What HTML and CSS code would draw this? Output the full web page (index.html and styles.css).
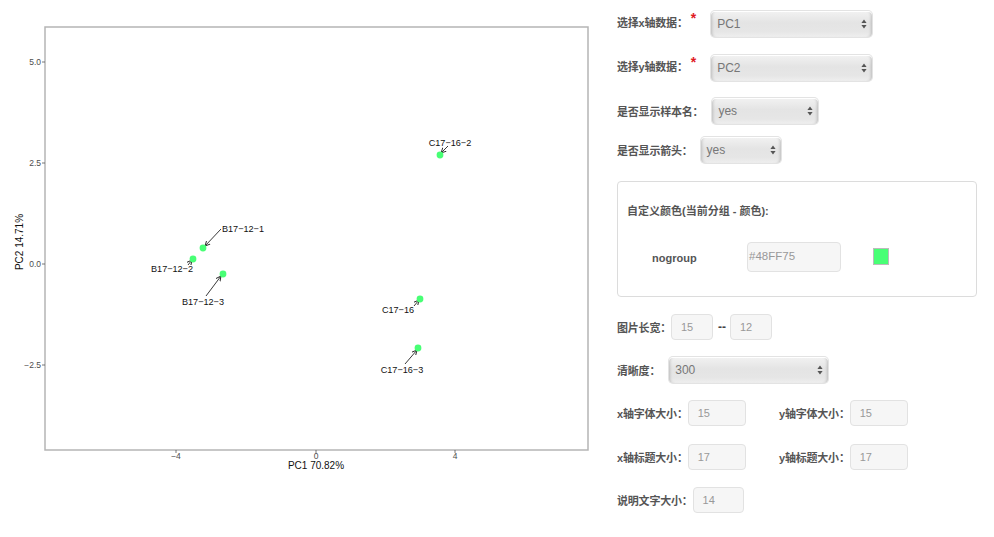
FILE: index.html
```html
<!DOCTYPE html>
<html>
<head>
<meta charset="utf-8">
<link rel="stylesheet" href="styles.css">
</head>
<body>
<div class="page">
  <div class="plot-col">
    <svg class="plot" width="610" height="537" viewBox="0 0 610 537">
      <defs>
        <marker id="ah" markerWidth="6" markerHeight="6" refX="5" refY="3" orient="auto" markerUnits="userSpaceOnUse">
          <path d="M0,0.5 L5,3 L0,5.5" fill="none" stroke="#222" stroke-width="0.9"/>
        </marker>
      </defs>
      <rect x="45" y="27" width="543" height="423" fill="#fff" stroke="#b5b5b5" stroke-width="1.5"/>
      <g class="tick">
        <line x1="42" y1="62" x2="45" y2="62"/>
        <line x1="42" y1="163" x2="45" y2="163"/>
        <line x1="42" y1="264" x2="45" y2="264"/>
        <line x1="42" y1="365" x2="45" y2="365"/>
        <line x1="176" y1="450" x2="176" y2="453"/>
        <line x1="316" y1="450" x2="316" y2="453"/>
        <line x1="455" y1="450" x2="455" y2="453"/>
      </g>
      <g class="ticklab">
        <text x="41" y="65" text-anchor="end">5.0</text>
        <text x="41" y="166" text-anchor="end">2.5</text>
        <text x="41" y="267" text-anchor="end">0.0</text>
        <text x="41" y="368" text-anchor="end">−2.5</text>
        <text x="176" y="459" text-anchor="middle">−4</text>
        <text x="316" y="459" text-anchor="middle">0</text>
        <text x="455" y="459" text-anchor="middle">4</text>
      </g>
      <text class="axtitle" x="316" y="469" text-anchor="middle">PC1 70.82%</text>
      <text class="axtitle" x="0" y="0" text-anchor="middle" transform="translate(23 242) rotate(-90)">PC2 14.71%</text>
      <g class="arrow">
        <line x1="221" y1="229" x2="205" y2="246" marker-end="url(#ah)"/>
        <line x1="188" y1="265" x2="192" y2="260" marker-end="url(#ah)"/>
        <line x1="206" y1="296" x2="221" y2="276" marker-end="url(#ah)"/>
        <line x1="448" y1="146" x2="441" y2="153" marker-end="url(#ah)"/>
        <line x1="414" y1="306" x2="419" y2="300" marker-end="url(#ah)"/>
        <line x1="405" y1="364" x2="417" y2="350" marker-end="url(#ah)"/>
      </g>
      <g class="pts">
        <circle cx="203" cy="248" r="3.4"/>
        <circle cx="193" cy="259" r="3.4"/>
        <circle cx="223" cy="274" r="3.4"/>
        <circle cx="440" cy="155" r="3.4"/>
        <circle cx="420" cy="299" r="3.4"/>
        <circle cx="418" cy="348" r="3.4"/>
      </g>
      <g class="ptlab">
        <text x="222" y="231.5">B17−12−1</text>
        <text x="193" y="271.5" text-anchor="end">B17−12−2</text>
        <text x="203" y="304.5" text-anchor="middle">B17−12−3</text>
        <text x="450" y="145.5" text-anchor="middle">C17−16−2</text>
        <text x="414" y="312.5" text-anchor="end">C17−16</text>
        <text x="402" y="372.5" text-anchor="middle">C17−16−3</text>
      </g>
    </svg>
  </div>

  <div class="panel">
    <div class="row r1">
      <span class="lab">选择x轴数据：</span><span class="star">*</span>
      <div class="sel w161"><span>PC1</span><svg class="updown" width="6" height="10" viewBox="0 0 6 10"><path d="M3 0.5 L5.6 4 L0.4 4 Z M3 9.5 L5.6 6 L0.4 6 Z" fill="#555"/></svg></div>
    </div>
    <div class="row r2">
      <span class="lab">选择y轴数据：</span><span class="star">*</span>
      <div class="sel w161"><span>PC2</span><svg class="updown" width="6" height="10" viewBox="0 0 6 10"><path d="M3 0.5 L5.6 4 L0.4 4 Z M3 9.5 L5.6 6 L0.4 6 Z" fill="#555"/></svg></div>
    </div>
    <div class="row r3">
      <span class="lab gap-a">是否显示样本名：</span>
      <div class="sel w106"><span>yes</span><svg class="updown" width="6" height="10" viewBox="0 0 6 10"><path d="M3 0.5 L5.6 4 L0.4 4 Z M3 9.5 L5.6 6 L0.4 6 Z" fill="#555"/></svg></div>
    </div>
    <div class="row r4">
      <span class="lab gap-b">是否显示箭头：</span>
      <div class="sel w80"><span>yes</span><svg class="updown" width="6" height="10" viewBox="0 0 6 10"><path d="M3 0.5 L5.6 4 L0.4 4 Z M3 9.5 L5.6 6 L0.4 6 Z" fill="#555"/></svg></div>
    </div>

    <div class="colorbox">
      <div class="cb-title">自定义颜色(当前分组 - 颜色):</div>
      <div class="cb-row">
        <span class="grp">nogroup</span>
        <div class="inp cinp">#48FF75</div>
        <span class="swatch"></span>
      </div>
    </div>

    <div class="row r5">
      <span class="lab gap-c">图片长宽：</span>
      <div class="inp w42">15</div>
      <span class="dash">--</span>
      <div class="inp w42">12</div>
    </div>
    <div class="row r6">
      <span class="lab gap-d">清晰度：</span>
      <div class="sel w159"><span>300</span><svg class="updown" width="6" height="10" viewBox="0 0 6 10"><path d="M3 0.5 L5.6 4 L0.4 4 Z M3 9.5 L5.6 6 L0.4 6 Z" fill="#555"/></svg></div>
    </div>
    <div class="row r7">
      <div class="half"><span class="lab gap-e">x轴字体大小：</span><div class="inp w58">15</div></div>
      <div class="half"><span class="lab gap-e">y轴字体大小：</span><div class="inp w58">15</div></div>
    </div>
    <div class="row r8">
      <div class="half"><span class="lab gap-e">x轴标题大小：</span><div class="inp w58">17</div></div>
      <div class="half"><span class="lab gap-e">y轴标题大小：</span><div class="inp w58">17</div></div>
    </div>
    <div class="row r9">
      <span class="lab gap-e">说明文字大小：</span>
      <div class="inp w51">14</div>
    </div>
  </div>
</div>
</body>
</html>
```

FILE: styles.css
```css
html, body {
  margin: 0;
  padding: 0;
  background: #fff;
}
body {
  width: 994px;
  height: 537px;
  overflow: hidden;
  font-family: "Liberation Sans", "Noto Sans CJK SC", sans-serif;
}
.page {
  display: flex;
  flex-direction: row;
}
.plot-col {
  width: 617px;
  flex: none;
}
.plot {
  display: block;
}
.tick line {
  stroke: #555;
  stroke-width: 0.8;
}
.ticklab text {
  font-family: "Liberation Sans", sans-serif;
  font-size: 8.5px;
  fill: #4d4d4d;
}
.axtitle {
  font-family: "Liberation Sans", sans-serif;
  font-size: 10px;
  fill: #111;
}
.arrow line {
  stroke: #222;
  stroke-width: 0.9;
}
.pts circle {
  fill: #48FF75;
}
.ptlab text {
  font-family: "Liberation Sans", sans-serif;
  font-size: 9.1px;
  fill: #111;
}

.panel {
  width: 360px;
  padding-top: 11px;
  display: flex;
  flex-direction: column;
}
.row {
  display: flex;
  align-items: center;
  height: 26px;
}
.r2 { margin-top: 18px; }
.r3 { margin-top: 17px; }
.r4 { margin-top: 13px; }
.r5 { margin-top: 17px; }
.r6 { margin-top: 17px; }
.r7 { margin-top: 17px; }
.r8 { margin-top: 18px; }
.r9 { margin-top: 17px; }

.lab {
  font-size: 11px;
  font-weight: bold;
  color: #555;
  white-space: nowrap;
  letter-spacing: -0.2px;
}
.r1 .lab, .r2 .lab { position: relative; top: -2px; }
.star {
  color: #e0191f;
  font-weight: bold;
  font-size: 14px;
  margin-left: 3px;
  margin-right: 15px;
  align-self: flex-start;
  line-height: 14px;
}
.gap-a { margin-right: 9px; }
.gap-b { margin-right: 8px; }
.gap-c { margin-right: 0px; }
.gap-d { margin-right: 9px; }
.gap-e { margin-right: 0px; }

.sel {
  height: 26px;
  box-sizing: border-box;
  border-radius: 4px;
  display: flex;
  align-items: center;
  justify-content: space-between;
  padding: 0 5px 0 6px;
  font-size: 12px;
  color: #777;
  background: linear-gradient(#f2f2f2, #e4e4e4 45%, #e6e6e6 80%, #efefef);
  box-shadow: inset 0 1px 0 #fff, inset 3px 0 3px -2px rgba(0,0,0,0.18), inset -3px 0 3px -2px rgba(0,0,0,0.18), 0 0 0 1px #e3e3e3;
}
.w161 { width: 161px; }
.w106 { width: 106px; }
.w80 { width: 80px; }
.w159 { width: 159px; }
.updown { flex: none; }

.inp {
  height: 26px;
  box-sizing: border-box;
  border: 1px solid #e2e2e2;
  border-radius: 4px;
  background: #f6f6f6;
  color: #999;
  font-size: 11px;
  display: flex;
  align-items: center;
  padding-left: 9px;
}
.w42 { width: 42px; }
.w58 { width: 58px; }
.w51 { width: 51px; }
.dash {
  font-size: 12px;
  font-weight: bold;
  color: #444;
  margin: 0 4px 0 5px;
}

.colorbox {
  margin-top: 18px;
  height: 116px;
  width: 360px;
  box-sizing: border-box;
  border: 1px solid #dcdcdc;
  border-radius: 4px;
  padding: 21px 0 0 9px;
}
.cb-title {
  font-size: 11px;
  font-weight: bold;
  color: #555;
  line-height: 16px;
}
.cb-row {
  display: flex;
  align-items: center;
  margin-top: 23px;
  padding-left: 25px;
}
.grp {
  width: 95px;
  font-size: 11px;
  font-weight: bold;
  color: #555;
  position: relative;
  top: 1px;
}
.cinp {
  width: 94px;
  height: 30px;
  padding-left: 1px;
  align-items: flex-start;
  padding-top: 7px;
  font-size: 11.5px;
  color: #999;
}
.swatch {
  width: 16px;
  height: 17px;
  box-sizing: border-box;
  background: #48FF75;
  border: 1px solid #bbb;
  margin-left: 32px;
  position: relative;
  top: -1px;
}

.half {
  display: flex;
  align-items: center;
  width: 162px;
}
```
